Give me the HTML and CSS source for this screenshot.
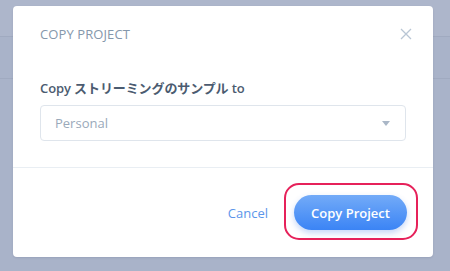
FILE: index.html
```html
<!DOCTYPE html>
<html lang="en">
<head>
    <meta charset="UTF-8">
    <meta name="viewport" content="width=device-width, initial-scale=1.0">
    <title>Copy Project</title>
    <link rel="stylesheet" href="styles.css">
</head>
<body>

<div class="backdrop">
    <div class="page-bar"></div>
    <div class="page-row"></div>
</div>

<div class="modal">
    <div class="modal-header">
        <h2 class="modal-title">COPY PROJECT</h2>
        <button class="close" aria-label="Close">
            <svg width="12" height="12" viewBox="0 0 12 12">
                <path d="M1 1 L11 11 M11 1 L1 11" stroke="#b9c6d5" stroke-width="1.3" fill="none"/>
            </svg>
        </button>
    </div>

    <div class="modal-body">
        <label class="field-label">Copy ストリーミングのサンプル to</label>
        <div class="select">
            <span class="select-value">Personal</span>
            <span class="caret"></span>
        </div>
    </div>

    <div class="modal-footer">
        <button class="cancel">Cancel</button>
        <div class="highlight">
            <button class="primary">Copy Project</button>
        </div>
    </div>
</div>

</body>
</html>
```

FILE: styles.css
```css
* {
    margin: 0;
    padding: 0;
    box-sizing: border-box;
}

body {
    font-family: 'Open Sans', 'Noto Sans CJK JP', sans-serif;
    background-color: #a9b3c9;
    height: 271px;
    overflow: hidden;
    padding: 6px 0 0 13px;
}

/* faded page behind the overlay */
.backdrop {
    position: absolute;
    top: 0;
    left: 0;
    right: 0;
}

.page-bar {
    height: 37px;
    background-color: #adb6cb;
    border-bottom: 1px solid #a0aac0;
}

.page-row {
    height: 42px;
    border-bottom: 1px solid #a0aac0;
}

.modal {
    position: relative;
    width: 420px;
    height: 251px;
    background-color: #fff;
    border-radius: 4px;
    box-shadow: 0 1px 2px rgba(60, 70, 100, 0.15);
}

.modal-header {
    display: flex;
    justify-content: space-between;
    align-items: center;
    height: 50px;
    padding: 6px 21px 0 27px;
}

.modal-title {
    font-size: 13px;
    font-weight: 400;
    color: #8597ab;
    letter-spacing: 0.1px;
}

.close {
    background: none;
    border: none;
    width: 12px;
    height: 12px;
    display: flex;
}

.modal-body {
    padding: 23px 27px 26px;
    border-bottom: 1px solid #e9eef3;
}

.field-label {
    display: block;
    font-size: 13px;
    line-height: 18px;
    font-weight: 600;
    color: #4b5b70;
    margin-bottom: 8px;
}

.field-label:lang(en) {
    letter-spacing: -0.1px;
}

.select {
    display: flex;
    justify-content: space-between;
    align-items: center;
    height: 36px;
    padding: 0 15px 0 14px;
    border: 1px solid #dfe5ec;
    border-radius: 4px;
}

.select-value {
    font-size: 13px;
    color: #9aa9ba;
}

.caret {
    width: 0;
    height: 0;
    border-left: 4px solid transparent;
    border-right: 4px solid transparent;
    border-top: 5px solid #aab7c7;
}

.modal-footer {
    display: flex;
    justify-content: flex-end;
    align-items: center;
    gap: 26px;
    padding: 27px 26px 0 0;
}

.cancel {
    background: none;
    border: none;
    font-family: inherit;
    font-size: 13px;
    color: #5b96ea;
}

.highlight {
    position: relative;
}

.highlight::before {
    content: '';
    position: absolute;
    top: -12px;
    left: -10px;
    right: -11px;
    bottom: -10px;
    border: 2px solid #e6215a;
    border-radius: 15px;
}

.primary {
    display: block;
    width: 113px;
    height: 35px;
    border: none;
    border-radius: 18px;
    background: linear-gradient(#73abf8, #3b84f5);
    box-shadow: 0 3px 6px rgba(60, 120, 230, 0.3);
    font-family: inherit;
    font-size: 13px;
    font-weight: 600;
    color: #fff;
}
```
